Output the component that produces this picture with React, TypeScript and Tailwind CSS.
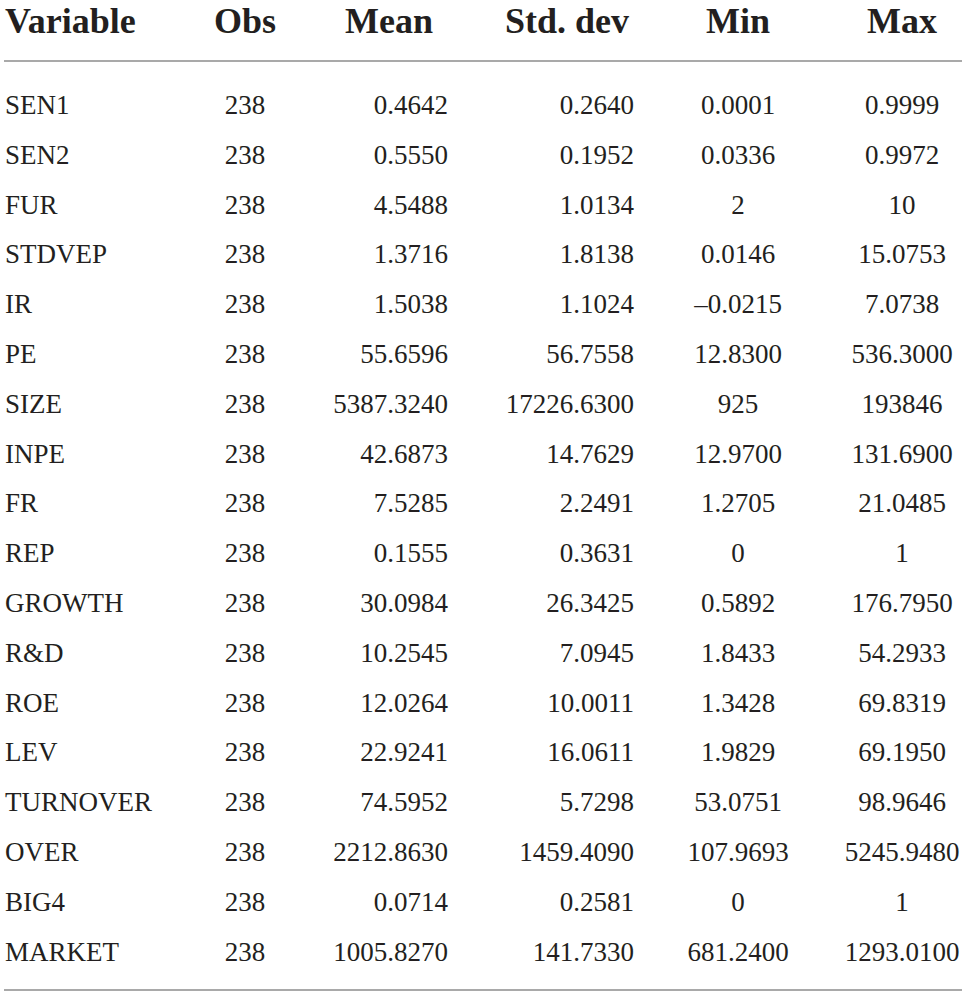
const rows: [string, string, string, string, string, string][] = [
  ["SEN1", "238", "0.4642", "0.2640", "0.0001", "0.9999"],
  ["SEN2", "238", "0.5550", "0.1952", "0.0336", "0.9972"],
  ["FUR", "238", "4.5488", "1.0134", "2", "10"],
  ["STDVEP", "238", "1.3716", "1.8138", "0.0146", "15.0753"],
  ["IR", "238", "1.5038", "1.1024", "\u20130.0215", "7.0738"],
  ["PE", "238", "55.6596", "56.7558", "12.8300", "536.3000"],
  ["SIZE", "238", "5387.3240", "17226.6300", "925", "193846"],
  ["INPE", "238", "42.6873", "14.7629", "12.9700", "131.6900"],
  ["FR", "238", "7.5285", "2.2491", "1.2705", "21.0485"],
  ["REP", "238", "0.1555", "0.3631", "0", "1"],
  ["GROWTH", "238", "30.0984", "26.3425", "0.5892", "176.7950"],
  ["R&D", "238", "10.2545", "7.0945", "1.8433", "54.2933"],
  ["ROE", "238", "12.0264", "10.0011", "1.3428", "69.8319"],
  ["LEV", "238", "22.9241", "16.0611", "1.9829", "69.1950"],
  ["TURNOVER", "238", "74.5952", "5.7298", "53.0751", "98.9646"],
  ["OVER", "238", "2212.8630", "1459.4090", "107.9693", "5245.9480"],
  ["BIG4", "238", "0.0714", "0.2581", "0", "1"],
  ["MARKET", "238", "1005.8270", "141.7330", "681.2400", "1293.0100"],
];

export default function App() {
  return (
    <div className="w-[968px] h-[997px] bg-white text-[#231f20] font-['Liberation_Serif',serif] overflow-hidden">
      <div className="ml-[4px] w-[958px]">
        {/* header */}
        <div className="flex h-[62px] pt-[1px] border-b-2 border-[#a9a9a9] text-[36px] leading-[40px] font-bold">
          <div className="w-[196px] pl-[1px]">Variable</div>
          <div className="w-[90px] text-center">Obs</div>
          <div className="w-[158px] pl-[40px] text-center">Mean</div>
          <div className="w-[186px] pl-[52px] text-center">Std. dev</div>
          <div className="w-[208px] text-center">Min</div>
          <div className="w-[120px] text-center">Max</div>
        </div>

        {/* body */}
        <div className="pt-[19px] pb-[12px] border-b-2 border-[#a9a9a9] text-[27px] leading-[49.8px]">
          {rows.map((r) => (
            <div key={r[0]} className="flex h-[49.8px]">
              <div className="w-[196px] pl-[1px]">{r[0]}</div>
              <div className="w-[90px] text-center">{r[1]}</div>
              <div className="w-[158px] pl-[40px] text-right">{r[2]}</div>
              <div className="w-[186px] pl-[52px] text-right">{r[3]}</div>
              <div className="w-[208px] text-center">{r[4]}</div>
              <div className="w-[120px] text-center whitespace-nowrap">{r[5]}</div>
            </div>
          ))}
        </div>
      </div>
    </div>
  );
}
